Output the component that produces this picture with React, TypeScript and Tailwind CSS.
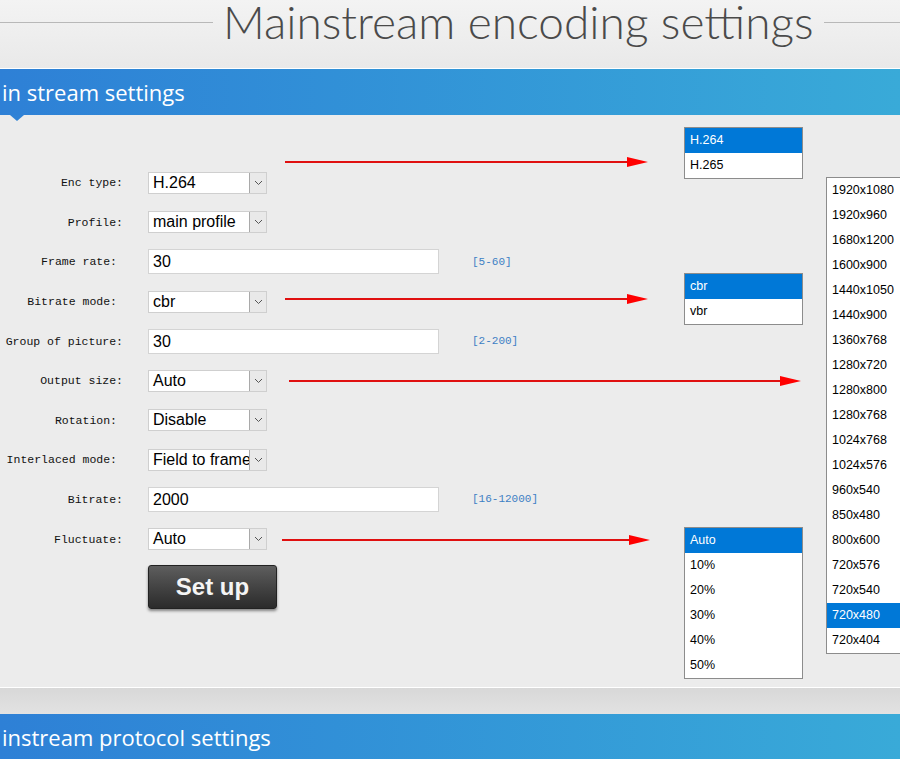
import React from "react"

type Field = {
  label: string
  kind: "select" | "input"
  value: string
  hint?: string
  // some labels sit one character further left
  shift?: boolean
}

const fields: Field[] = [
  { label: "Enc type:", kind: "select", value: "H.264" },
  { label: "Profile:", kind: "select", value: "main profile" },
  { label: "Frame rate:", kind: "input", value: "30", hint: "[5-60]", shift: true },
  { label: "Bitrate mode:", kind: "select", value: "cbr", shift: true },
  { label: "Group of picture:", kind: "input", value: "30", hint: "[2-200]" },
  { label: "Output size:", kind: "select", value: "Auto" },
  { label: "Rotation:", kind: "select", value: "Disable", shift: true },
  { label: "Interlaced mode:", kind: "select", value: "Field to frame", shift: true },
  { label: "Bitrate:", kind: "input", value: "2000", hint: "[16-12000]" },
  { label: "Fluctuate:", kind: "select", value: "Auto" },
]

const resolutions = [
  "1920x1080", "1920x960", "1680x1200", "1600x900", "1440x1050", "1440x900",
  "1360x768", "1280x720", "1280x800", "1280x768", "1024x768", "1024x576",
  "960x540", "850x480", "800x600", "720x576", "720x540", "720x480", "720x404",
]

function Chevron() {
  return (
    <svg width="9" height="6" viewBox="0 0 9 6">
      <path d="M1 1 L4.5 4.5 L8 1" fill="none" stroke="#555" strokeWidth="1" />
    </svg>
  )
}

function SelectBox({ value }: { value: string }) {
  return (
    <div className="relative w-[119px] h-[22px] bg-white border border-[#cfcfcf] overflow-hidden">
      <span className="absolute left-[4px] top-0 leading-[20px] text-[16px] text-black whitespace-nowrap font-['Liberation_Sans',Arial,sans-serif]">
        {value}
      </span>
      <div className="absolute right-0 top-0 w-[17px] h-[20px] bg-[#e9e9e9] border-l border-[#a9a9a9] flex items-center justify-center">
        <Chevron />
      </div>
    </div>
  )
}

function TextBox({ value }: { value: string }) {
  return (
    <div className="w-[291px] h-[25px] bg-white border border-[#d4d4d4] pl-[4px] leading-[23px] text-[16px] text-black font-['Liberation_Sans',Arial,sans-serif]">
      {value}
    </div>
  )
}

function OptionList({ items, selected, className }: { items: string[]; selected: string; className: string }) {
  return (
    <div className={`absolute bg-white border border-[#8c8c8c] font-['Liberation_Sans',Arial,sans-serif] text-[12.5px] ${className}`}>
      {items.map((item) => (
        <div
          key={item}
          className={`h-[25px] leading-[25px] pl-[5px] whitespace-nowrap ${item === selected ? "bg-[#0078d7] text-white" : "text-black"}`}
        >
          {item}
        </div>
      ))}
    </div>
  )
}

function Arrow({ x1, x2, y }: { x1: number; x2: number; y: number }) {
  return (
    <g>
      <line x1={x1} y1={y} x2={x2 - 18} y2={y} stroke="#e01010" strokeWidth="2" />
      <polygon points={`${x2 - 21},${y - 5} ${x2},${y} ${x2 - 21},${y + 5}`} fill="#f00" />
    </g>
  )
}

export default function App() {
  return (
    <div className="relative w-[900px] h-[759px] overflow-hidden bg-[#ececec]">
      {/* page title */}
      <div className="h-[69px] bg-gradient-to-b from-[#f3f3f3] to-[#e9e9e9] border-b border-white">
        <div className="flex items-center h-[44px]">
          <div className="w-[213px] h-px bg-[#b8b8b8]" />
          <h1 className="mx-[10px] text-[46px] leading-[46px] font-light tracking-[0px] text-[#4a4a4a] whitespace-nowrap font-['Lato',sans-serif]">
            Mainstream encoding settings
          </h1>
          <div className="flex-1 h-px bg-[#b8b8b8]" />
        </div>
      </div>

      {/* section bar */}
      <div className="relative h-[46px] bg-gradient-to-r from-[#2e80d6] to-[#39aad8] flex items-center">
        <span className="pl-[2px] text-[22px] text-white font-['Open_Sans',sans-serif]">in stream settings</span>
        <div className="absolute left-[10px] -bottom-[6px] w-0 h-0 border-l-[7px] border-r-[7px] border-t-[6px] border-l-transparent border-r-transparent border-t-[#2f82d6]" />
      </div>

      {/* form */}
      <div className="h-[573px] pt-[48px] border-b border-white">
        {fields.map((f) => (
          <div key={f.label} className="flex items-center h-[39.6px]">
            <div
              className={`w-[123px] text-right text-[11.5px] text-[#111] whitespace-nowrap font-['Liberation_Mono',monospace] ${f.shift ? "pr-[6px]" : ""}`}
            >
              {f.label}
            </div>
            <div className="ml-[25px]">
              {f.kind === "select" ? <SelectBox value={f.value} /> : <TextBox value={f.value} />}
            </div>
            {f.hint && (
              <span className="ml-[33px] text-[11px] text-[#3d7fc4] font-['Liberation_Mono',monospace]">{f.hint}</span>
            )}
          </div>
        ))}
        <button className="ml-[148px] mt-[6px] w-[129px] h-[44px] rounded-[3px] border border-[#222] bg-gradient-to-b from-[#5e5e5e] to-[#2b2b2b] shadow-[0_2px_3px_rgba(0,0,0,0.45)] text-[#f4f4f4] text-[24px] font-bold font-['Liberation_Sans',Arial,sans-serif]">
          Set up
        </button>
      </div>

      <div className="h-[26px] bg-gradient-to-b from-[#d8d8d8] to-[#e2e2e2]" />

      <div className="h-[46px] bg-gradient-to-r from-[#2e80d6] to-[#39aad8] flex items-center">
        <span className="pl-[2px] text-[22px] text-white font-['Open_Sans',sans-serif]">instream protocol settings</span>
      </div>

      {/* expanded option lists */}
      <OptionList items={["H.264", "H.265"]} selected="H.264" className="left-[684px] top-[127px] w-[119px]" />
      <OptionList items={["cbr", "vbr"]} selected="cbr" className="left-[684px] top-[273px] w-[119px]" />
      <OptionList
        items={["Auto", "10%", "20%", "30%", "40%", "50%"]}
        selected="Auto"
        className="left-[684px] top-[527px] w-[119px]"
      />
      <OptionList items={resolutions} selected="720x480" className="left-[826px] top-[177px] w-[90px]" />

      {/* pointers from each select to its list */}
      <svg className="absolute left-0 top-0 pointer-events-none" width="900" height="759">
        <Arrow x1={285} x2={648} y={162} />
        <Arrow x1={285} x2={648} y={299} />
        <Arrow x1={289} x2={801} y={381} />
        <Arrow x1={282} x2={650} y={540} />
      </svg>
    </div>
  )
}
